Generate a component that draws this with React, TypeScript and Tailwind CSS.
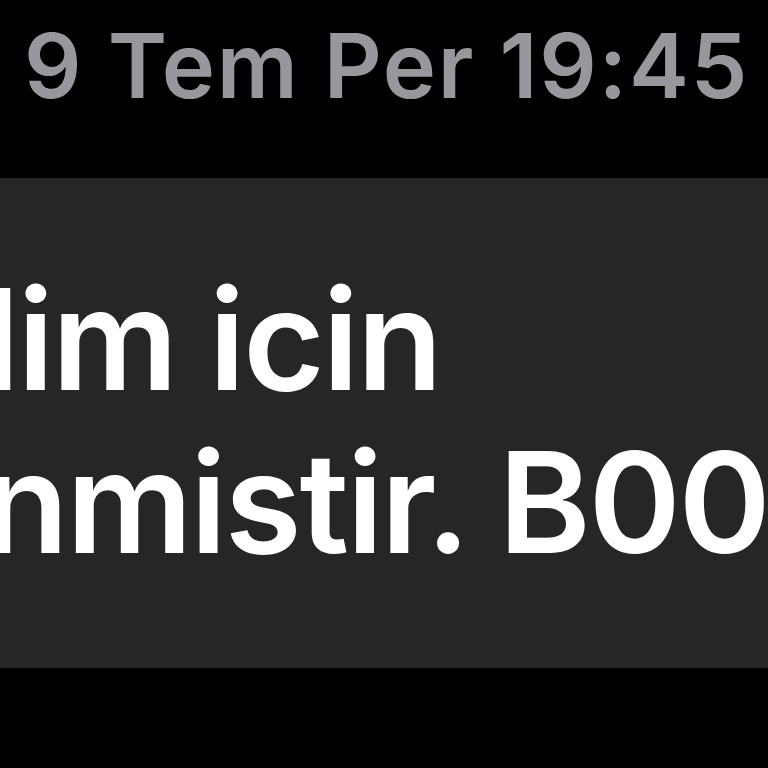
export default function App() {
  return (
    <div className="w-[768px] h-[768px] bg-black overflow-hidden flex flex-col" style={{ fontFamily: 'Inter, "Noto Sans", sans-serif' }}>
      <div className="h-[178px] flex items-start pl-[24px] pt-[16px]">
        <span className="text-[#98979d] text-[90px] font-semibold leading-[100px] tracking-[1.7px] whitespace-nowrap">9 Tem Per 19:45</span>
      </div>
      <div className="h-[490px] bg-[#262629] overflow-hidden pt-[80px]">
        <div className="ml-[-17px] text-white text-[140px] font-semibold leading-[163px] tracking-[-2.2px] whitespace-nowrap">
          <div>lim icin</div>
          <div>nmistir. B009</div>
        </div>
      </div>
    </div>
  );
}
